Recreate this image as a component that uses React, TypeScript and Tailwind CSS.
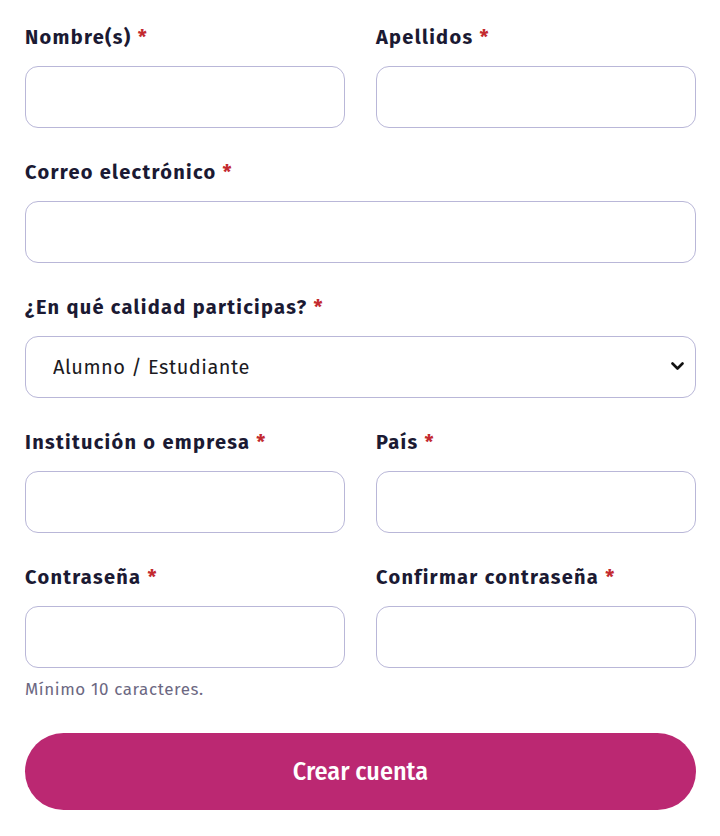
import React from "react";

const font = { fontFamily: '"Fira Sans", "Noto Sans", "Open Sans", sans-serif' };

function Label({ text }: { text: string }) {
  return (
    <label className="block h-[28px] mb-[15px] text-[20px] leading-[28px] font-bold text-[#1b1a33] tracking-[1.3px]">
      {text} <span className="text-[#c32a2f]">*</span>
    </label>
  );
}

function Input({ type = "text" }: { type?: string }) {
  return (
    <input
      type={type}
      className="block w-full h-[62px] rounded-[13px] border-[1.5px] border-[#b9b7d8] bg-white px-[27px] text-[20px] outline-none"
    />
  );
}

export default function App() {
  return (
    <div className="min-h-[836px] bg-white px-[25px] pt-[23px]" style={font}>
      <div className="grid grid-cols-2 gap-x-[31px] w-[671px]">
        <div>
          <Label text="Nombre(s)" />
          <Input />
        </div>
        <div>
          <Label text="Apellidos" />
          <Input />
        </div>
      </div>

      <div className="mt-[30px] w-[671px]">
        <Label text="Correo electrónico" />
        <Input type="email" />
      </div>

      <div className="mt-[30px] w-[671px]">
        <Label text="¿En qué calidad participas?" />
        <div className="relative">
          <select className="block w-full h-[62px] appearance-none rounded-[13px] border-[1.5px] border-[#b9b7d8] bg-white pl-[27px] pr-[40px] text-[20px] text-[#1b1a22] tracking-[0.5px] outline-none">
            <option>Alumno / Estudiante</option>
            <option>Profesor / Docente</option>
          </select>
          <svg
            className="pointer-events-none absolute right-[12px] top-[25px]"
            width="13"
            height="10"
            viewBox="0 0 13 10"
          >
            <path d="M1.5 2.5 L6.5 7.5 L11.5 2.5" fill="none" stroke="#111" strokeWidth="2.6" strokeLinecap="round" strokeLinejoin="round" />
          </svg>
        </div>
      </div>

      <div className="mt-[30px] grid grid-cols-2 gap-x-[31px] w-[671px]">
        <div>
          <Label text="Institución o empresa" />
          <Input />
        </div>
        <div>
          <Label text="País" />
          <Input />
        </div>
      </div>

      <div className="mt-[30px] grid grid-cols-2 gap-x-[31px] w-[671px]">
        <div>
          <Label text="Contraseña" />
          <Input type="password" />
        </div>
        <div>
          <Label text="Confirmar contraseña" />
          <Input type="password" />
        </div>
      </div>

      <p className="mt-[12px] text-[17px] leading-[20px] text-[#6c6882] tracking-[0.6px]">Mínimo 10 caracteres.</p>

      <button
        type="button"
        className="mt-[33px] block w-[671px] h-[77px] rounded-full bg-[#bb2872] text-white text-[26px] font-medium"
        style={{ fontFamily: '"Fira Sans Condensed", "Liberation Sans Narrow", "Roboto", sans-serif' }}
      >
        Crear cuenta
      </button>
    </div>
  );
}
